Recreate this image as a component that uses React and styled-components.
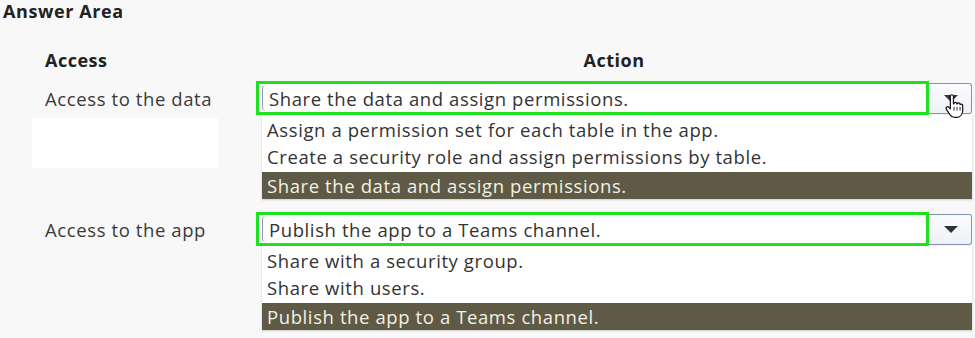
import React from "react";
import styled, { createGlobalStyle } from "styled-components";

const GlobalStyle = createGlobalStyle`
  html, body {
    margin: 0;
    padding: 0;
    background: #f8f8f8;
  }
  body {
    font-family: "Open Sans", "Noto Sans", sans-serif;
    color: #333;
  }
`;

const questions = [
  {
    label: "Access to the data",
    selected: "Share the data and assign permissions.",
    options: [
      "Assign a permission set for each table in the app.",
      "Create a security role and assign permissions by table.",
      "Share the data and assign permissions.",
    ],
    hover: true,
    blank: true,
  },
  {
    label: "Access to the app",
    selected: "Publish the app to a Teams channel.",
    options: [
      "Share with a security group.",
      "Share with users.",
      "Publish the app to a Teams channel.",
    ],
  },
];

export default function App() {
  return (
    <Page>
      <GlobalStyle />
      <Title>Answer Area</Title>
      <Table>
        <HeadCell>Access</HeadCell>
        <HeadCell center>Action</HeadCell>
        {questions.map((q) => (
          <React.Fragment key={q.label}>
            <LabelCell>
              <Label>{q.label}</Label>
              {q.blank && <BlankBlock />}
            </LabelCell>
            <Dropdown>
              <SelectRow>
                <Field>
                  <FieldInner>{q.selected}</FieldInner>
                </Field>
                <ArrowButton>
                  <Triangle />
                  {q.hover && (
                    <Hand viewBox="0 0 24 28">
                      <path
                        d="M8 3.5c0-1.1.8-1.8 1.7-1.8s1.7.7 1.7 1.8v8.2l.4-.1c.2-1 .9-1.5 1.7-1.5.9 0 1.6.7 1.6 1.7l.3-.1c.3-.7.9-1.1 1.6-1.1.9 0 1.6.7 1.6 1.6v.3c.3-.4.8-.6 1.3-.6.9 0 1.6.7 1.6 1.6v5.4c0 4.3-2.7 7.6-6.9 7.6h-1.7c-2.4 0-3.9-1-5.2-2.9l-4-6c-.6-.9-.4-2 .4-2.5.8-.5 1.8-.3 2.4.5L8 17.2z"
                        fill="#fff"
                        stroke="#111"
                        strokeWidth="1.3"
                        strokeLinejoin="round"
                      />
                      <path d="M12 15v4M15.3 15v4M18.6 15v4" stroke="#111" strokeWidth="1" />
                    </Hand>
                  )}
                </ArrowButton>
              </SelectRow>
              <OptionList>
                {q.options.map((opt) => (
                  <Option key={opt} active={opt === q.selected}>
                    {opt}
                  </Option>
                ))}
              </OptionList>
            </Dropdown>
          </React.Fragment>
        ))}
      </Table>
    </Page>
  );
}

const Page = styled.div`
  width: 975px;
  height: 338px;
  padding: 0 0 0 3px;
  box-sizing: border-box;
  overflow: hidden;
`;

const Title = styled.div`
  font-weight: 700;
  font-size: 18px;
  line-height: 22px;
  color: #222;
  letter-spacing: 0.6px;
`;

const Table = styled.div`
  display: grid;
  grid-template-columns: 211px 716px;
  row-gap: 13px;
  margin: 27px 0 0 42px;
  align-items: start;
`;

const HeadCell = styled.div`
  font-weight: 700;
  font-size: 18px;
  line-height: 22px;
  color: #222;
  letter-spacing: 0.5px;
  text-align: ${(p) => (p.center ? "center" : "left")};
  margin-bottom: -3px;
`;

const LabelCell = styled.div`
  display: flex;
  flex-direction: column;
`;

const Label = styled.div`
  height: 34px;
  display: flex;
  align-items: center;
  font-size: 18.5px;
  color: #3a3a3a;
  letter-spacing: 0.6px;
`;

const BlankBlock = styled.div`
  width: 186px;
  height: 50px;
  margin: 3px 0 0 -13px;
  background: #ffffff;
`;

const Dropdown = styled.div`
  display: flex;
  flex-direction: column;
`;

const SelectRow = styled.div`
  display: flex;
  align-items: center;
  height: 34px;
`;

const Field = styled.div`
  flex: 1;
  height: 34px;
  box-sizing: border-box;
  border: 3px solid #1ee21e;
  background: #fff;
  padding: 1px 0 1px 3px;
  display: flex;
`;

const FieldInner = styled.div`
  flex: 1;
  display: flex;
  align-items: center;
  border-left: 1px solid #8a9ab8;
  border-radius: 4px 0 0 4px;
  padding-left: 6px;
  font-size: 18.5px;
  color: #333;
  letter-spacing: 0.6px;
  white-space: nowrap;
`;

const ArrowButton = styled.div`
  position: relative;
  width: 43px;
  height: 31px;
  box-sizing: border-box;
  border: 1px solid #7f93b9;
  border-left: none;
  border-radius: 0 3px 3px 0;
  background: linear-gradient(#fbfcfe, #eef1f7);
  display: flex;
  align-items: center;
  justify-content: center;
`;

const Triangle = styled.div`
  width: 0;
  height: 0;
  border-left: 7px solid transparent;
  border-right: 7px solid transparent;
  border-top: 7px solid #333;
  margin-left: 2px;
`;

const Hand = styled.svg`
  position: absolute;
  left: 14px;
  top: 9px;
  width: 22px;
  height: 26px;
`;

const OptionList = styled.div`
  margin-left: 6px;
  background: #fff;
  padding-top: 1px;
  box-shadow: 0 1px 2px rgba(0, 0, 0, 0.18);
`;

const Option = styled.div`
  height: 27px;
  margin-top: ${(p) => (p.active ? "2px" : "0")};
  display: flex;
  align-items: center;
  padding-left: 5px;
  font-size: 18.5px;
  letter-spacing: 0.6px;
  white-space: nowrap;
  color: ${(p) => (p.active ? "#f3f1e4" : "#333")};
  background: ${(p) => (p.active ? "#5e5a46" : "transparent")};
`;
